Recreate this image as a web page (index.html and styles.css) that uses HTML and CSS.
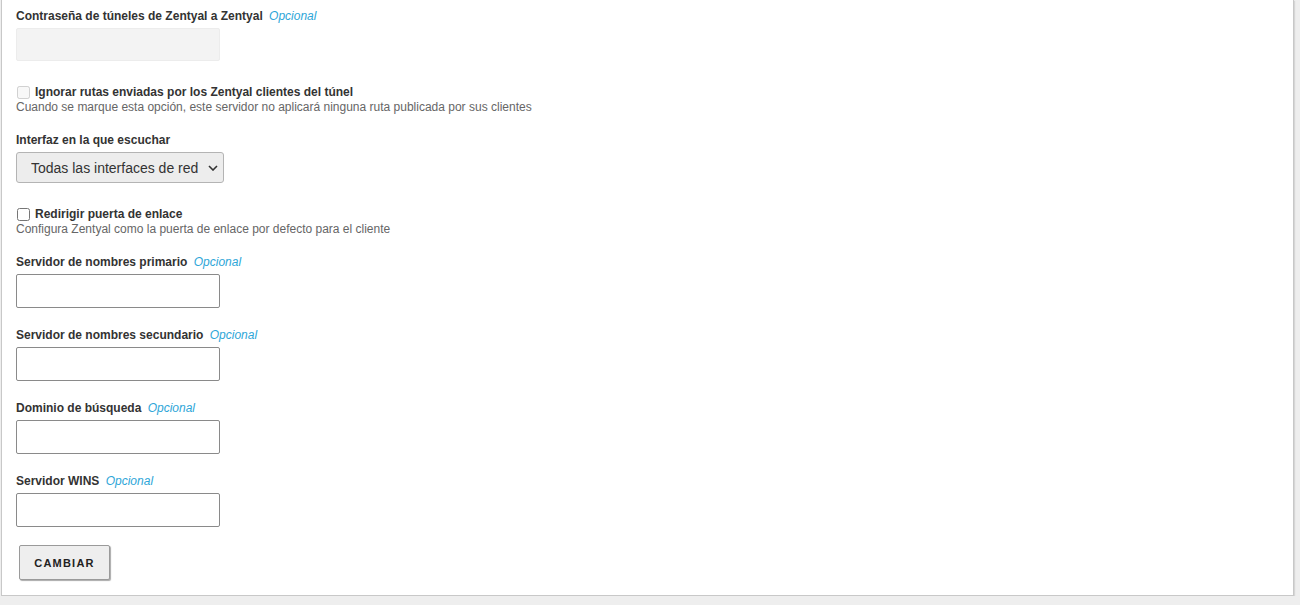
FILE: index.html
```html
<!DOCTYPE html>
<html>
<head>
    <title>VPN - Servidor</title>
    <link rel="stylesheet" href="styles.css">
</head>
<body>
    <div class="panel">
        <form onsubmit="return false;">
            <div class="field">
                <label class="field-label">Contraseña de túneles de Zentyal a Zentyal <span class="optional">Opcional</span></label>
                <input type="password" class="text-input" disabled>
            </div>

            <div class="check-field">
                <label class="check-label"><input type="checkbox" disabled> Ignorar rutas enviadas por los Zentyal clientes del túnel</label>
                <div class="help">Cuando se marque esta opción, este servidor no aplicará ninguna ruta publicada por sus clientes</div>
            </div>

            <div class="field">
                <label class="field-label" for="iface">Interfaz en la que escuchar</label>
                <select id="iface" class="select-input">
                    <option>Todas las interfaces de red</option>
                </select>
            </div>

            <div class="check-field">
                <label class="check-label"><input type="checkbox"> Redirigir puerta de enlace</label>
                <div class="help">Configura Zentyal como la puerta de enlace por defecto para el cliente</div>
            </div>

            <div class="field">
                <label class="field-label" for="dns1">Servidor de nombres primario <span class="optional">Opcional</span></label>
                <input type="text" id="dns1" class="text-input">
            </div>

            <div class="field">
                <label class="field-label" for="dns2">Servidor de nombres secundario <span class="optional">Opcional</span></label>
                <input type="text" id="dns2" class="text-input">
            </div>

            <div class="field">
                <label class="field-label" for="domain">Dominio de búsqueda <span class="optional">Opcional</span></label>
                <input type="text" id="domain" class="text-input">
            </div>

            <div class="field">
                <label class="field-label" for="wins">Servidor WINS <span class="optional">Opcional</span></label>
                <input type="text" id="wins" class="text-input">
            </div>

            <button type="submit" class="btn">Cambiar</button>
        </form>
    </div>
</body>
</html>
```

FILE: styles.css
```css
body {
    margin: 0;
    background-color: #eeeeee;
    font-family: "Liberation Sans", Arial, sans-serif;
    color: #333;
}

.panel {
    margin: 0 6px 0 1px;
    padding: 7px 14px 15px;
    background-color: #fff;
    border: 1px solid #c8c8c8;
    border-top: none;
    box-shadow: 1px 1px 1px #d6d6d6;
}

.field {
    margin-bottom: 18px;
}

.field-label {
    display: block;
    font-size: 12px;
    font-weight: bold;
    line-height: 18px;
    margin-bottom: 3px;
}

.optional {
    font-weight: normal;
    font-style: italic;
    color: #2ea6d8;
    margin-left: 3px;
}

.text-input {
    display: block;
    box-sizing: border-box;
    width: 204px;
    height: 34px;
    margin: 0;
    padding: 4px 6px;
    border: 1px solid #8a8a8a;
    border-radius: 2px;
    font-size: 13px;
}

.text-input:disabled {
    height: 33px;
    background-color: #f3f3f3;
    border-color: #ececec;
}

.check-field {
    margin-top: 24px;
    margin-bottom: 17px;
}

.check-label {
    display: flex;
    align-items: center;
    gap: 5px;
    font-size: 12px;
    font-weight: bold;
    line-height: 15px;
}

.check-label input {
    margin: 0 0 0 1px;
    width: 13px;
    height: 13px;
}

.help {
    font-size: 12px;
    line-height: 14px;
    color: #666;
}

.select-input {
    display: block;
    box-sizing: border-box;
    width: 208px;
    height: 31px;
    margin: 0;
    padding: 0 0 0 14px;
    font-family: "Liberation Sans", Arial, sans-serif;
    font-size: 14px;
    color: #333;
    background-color: #ededed;
    background-image: url("data:image/svg+xml,%3Csvg xmlns='http://www.w3.org/2000/svg' width='10' height='6' viewBox='0 0 10 6'%3E%3Cpath d='M1 1l4 4 4-4' fill='none' stroke='%23333' stroke-width='1.6'/%3E%3C/svg%3E");
    background-repeat: no-repeat;
    background-position: right 5px center;
    border: 1px solid #b4b4b4;
    border-radius: 3px;
    appearance: none;
    -webkit-appearance: none;
}

.btn {
    display: block;
    margin: 18px 0 0 3px;
    width: 91px;
    height: 35px;
    background-color: #eeeeee;
    border: 1px solid #9a9a9a;
    border-radius: 2px;
    box-shadow: 1px 1px 1px #aaa;
    font-family: "Liberation Sans", Arial, sans-serif;
    font-size: 11px;
    font-weight: bold;
    letter-spacing: 1.2px;
    text-transform: uppercase;
    color: #222;
    cursor: pointer;
}
```
